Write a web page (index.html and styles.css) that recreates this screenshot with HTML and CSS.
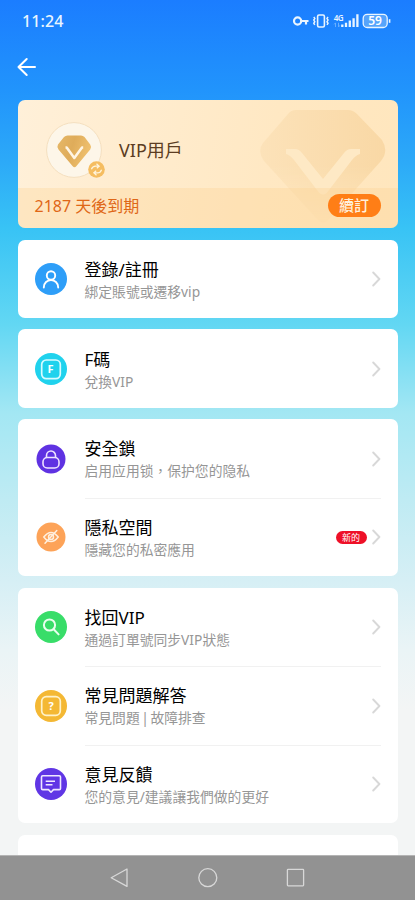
FILE: index.html
```html
<!DOCTYPE html>
<html lang="zh-Hant">
<head>
<meta charset="utf-8">
<meta name="viewport" content="width=device-width, initial-scale=1">
<title>VIP用戶</title>
<link rel="stylesheet" href="styles.css">
</head>
<body>
<div class="screen">
  <header class="status">
    <span class="time">11:24</span>
    <svg class="status-icons" width="100" height="18" viewBox="0 0 100 18" fill="none" stroke="#e9f5ff">
      <circle cx="5.6" cy="9" r="3.6" stroke-width="2.2"/>
      <path d="M9.2 9H16.5M14 9v3.6" stroke-width="2.2"/>
      <rect x="25.6" y="3" width="6.8" height="12" rx="1.4" stroke-width="1.6"/>
      <path d="M21.800 5l1 1.500-1 1.600 1 1.600-1 1.600 1 1.600M36 5l-1 1.500 1 1.600-1 1.600 1 1.600-1 1.600" stroke-width="1.500"/>
      <text class="net" x="41.800" y="8.500">4G</text>
      <path d="M43.500 15v-4m-1.300 1.400L43.500 10.800M46.500 10.800v4m1.300-1.400L46.500 15" stroke="#78b9ff" stroke-width=".8"/>
      <path d="M50.300 15v-2.500M54 15v-4.200M57.800 15V8.500M61.600 15V6.200M65.400 15V2.300" stroke-width="2.300"/>
      <rect x="71.200" y="2.300" width="24" height="13.200" rx="4" fill="#56a4fb" stroke-width="1.300"/>
      <path d="M97.600 7.200v3.600" stroke-width="1.600"/>
      <text class="battery" x="83.100" y="13.200" text-anchor="middle">59</text>
    </svg>
  </header>
  <nav class="appbar">
    <svg width="20" height="20" viewBox="0 0 20 20" fill="none" stroke="#fff" stroke-width="2" stroke-linecap="round" stroke-linejoin="round"><path d="M9.700 2L1.500 10l8.200 8M1.500 10H18"/></svg>
  </nav>
  <main class="cards">
    <section class="vip">
      <svg class="gem" width="128" height="116" viewBox="0 0 128 116">
        <defs><linearGradient id="gemFill" x1="0" y1=".4" x2="1" y2=".4"><stop offset="0" stop-color="#fce2b9"/><stop offset="1" stop-color="#f9d8a5"/></linearGradient>
        <linearGradient id="gemFade" x1="0" y1="0" x2="0" y2="1"><stop offset=".5" stop-color="#fff"/><stop offset="1" stop-color="#fff" stop-opacity=".15"/></linearGradient>
        <mask id="gemMask"><rect width="128" height="116" fill="url(#gemFade)"/></mask></defs>
        <path mask="url(#gemMask)" fill="url(#gemFill)" d="M37 1H89Q94 1 98 5L123 31Q130 42 122 52L70 110Q64 117 58 110L5 52Q-2 42 4 34L29 5Q32 1 37 1Z"/>
        <path fill="#fee9c5" d="M27 40H36Q40 40 43 44L64 70 85 44Q88 40 92 40H101V45Q97 46 93 51L70 81Q64 90 58 81L35 51Q31 46 27 45Z"/>
      </svg>
      <div class="vip-top">
        <div class="avatar">
          <svg width="56" height="56" viewBox="0 0 56 56">
            <defs><linearGradient id="badge" x1="0" y1="0" x2="1" y2=".3"><stop offset="0" stop-color="#e6b868"/><stop offset=".5" stop-color="#dfac5a"/><stop offset="1" stop-color="#efc06e"/></linearGradient></defs>
            <circle cx="28" cy="28" r="27.400" fill="#fdf6e9" stroke="#f4dfbf"/>
            <path fill="url(#badge)" d="M21.500 13.500H35Q37 13.500 38.500 15L44.200 22.500Q46 25 44.200 27.500L30.500 44Q28.500 46.500 26.500 44L12.500 27.500Q10.500 25 12 22.500L18 15Q19.500 13.500 21.500 13.500Z"/>
            <path d="M19.500 25.500h1.200L28.300 36 36 25.500h1.200" fill="none" stroke="#fff5e4" stroke-width="2.500" stroke-linejoin="round"/>
          </svg>
          <svg class="swap" width="17" height="17" viewBox="0 0 17 17"><circle cx="8.500" cy="8.500" r="8.300" fill="#f5bd61"/><path d="M3.400 8.300Q4.500 5.200 7.500 5.200H11M8.500 2.800L11.200 5.200 8.800 7.300M13.600 8.700Q12.500 11.800 9.500 11.800H6M8.500 14.200L5.800 11.800 8.200 9.700" fill="none" stroke="#fff4dc" stroke-width="1.200"/></svg>
        </div>
        <h1>VIP用戶</h1>
      </div>
      <div class="vip-bottom"><span>2187 天後到期</span><button>續訂</button></div>
    </section>

    <section class="card single">
      <div class="row">
        <svg class="icon" viewBox="0 0 32 32"><circle cx="16" cy="16" r="16" fill="#2e9ef8"/><g fill="none" stroke="#fff" stroke-width="1.900" stroke-linecap="round"><circle cx="16" cy="12.500" r="4.200"/><path d="M8.800 24.500C8.800 14.600 23.200 14.600 23.200 24.500"/></g></svg>
        <div class="body"><h2>登錄/註冊</h2><p>綁定賬號或遷移vip</p></div>
        <svg class="chevron" viewBox="0 0 9 16"><path d="M1.200 1.500L7.400 8l-6.200 6.500"/></svg>
      </div>
    </section>

    <section class="card single">
      <div class="row">
        <svg class="icon" viewBox="0 0 32 32"><circle cx="16" cy="16" r="16" fill="#20d2ed"/><rect x="6.700" y="7" width="18.600" height="18.600" rx="4.500" fill="none" stroke="#d8fbff" stroke-width="1.700"/><text class="glyph" x="15.500" y="20.300">F</text></svg>
        <div class="body"><h2>F碼</h2><p>兌換VIP</p></div>
        <svg class="chevron" viewBox="0 0 9 16"><path d="M1.200 1.500L7.400 8l-6.200 6.500"/></svg>
      </div>
    </section>

    <section class="card">
      <div class="row">
        <svg class="icon" viewBox="0 0 32 32"><circle cx="16" cy="16" r="14.500" fill="#5f32e2"/><g fill="none" stroke="#eee3ff" stroke-width="1.600"><rect x="8" y="14.500" width="16" height="10.500" rx="4.300"/><path d="M11.500 14.500V12.500a4.500 4.500 0 0 1 9 0V14.500"/></g></svg>
        <div class="body"><h2>安全鎖</h2><p>启用应用锁，保护您的隐私</p></div>
        <svg class="chevron" viewBox="0 0 9 16"><path d="M1.200 1.500L7.400 8l-6.200 6.500"/></svg>
      </div>
      <div class="row">
        <svg class="icon" viewBox="0 0 32 32"><circle cx="16" cy="16" r="14.500" fill="#fda358"/><g fill="none" stroke="#fff0df" stroke-width="1.500" stroke-linecap="round"><path d="M8.800 16Q16 6.800 23.200 16Q16 25.200 8.800 16Z"/><circle cx="16" cy="16" r="2.500"/><path d="M10 22.200L21.800 9.500"/></g></svg>
        <div class="body"><h2>隱私空間</h2><p>隱藏您的私密應用</p></div>
        <span class="new">新的</span>
        <svg class="chevron" viewBox="0 0 9 16"><path d="M1.200 1.500L7.400 8l-6.200 6.500"/></svg>
      </div>
    </section>

    <section class="card">
      <div class="row">
        <svg class="icon" viewBox="0 0 32 32"><circle cx="16" cy="16" r="16" fill="#38dd69"/><g fill="none" stroke="#e9ffef" stroke-width="2" stroke-linecap="round"><circle cx="14.500" cy="14" r="5.600"/><path d="M18.700 18.300L23.600 23.400"/></g></svg>
        <div class="body"><h2>找回VIP</h2><p>通過訂單號同步VIP狀態</p></div>
        <svg class="chevron" viewBox="0 0 9 16"><path d="M1.200 1.500L7.400 8l-6.200 6.500"/></svg>
      </div>
      <div class="row">
        <svg class="icon" viewBox="0 0 32 32"><circle cx="16" cy="16" r="16" fill="#f4b834"/><rect x="6.700" y="6.700" width="18.600" height="18.600" rx="4.500" fill="none" stroke="#fff2c9" stroke-width="1.700"/><text class="glyph" x="16" y="19.800">?</text></svg>
        <div class="body"><h2>常見問題解答</h2><p class="tight">常見問題 | 故障排查</p></div>
        <svg class="chevron" viewBox="0 0 9 16"><path d="M1.200 1.500L7.400 8l-6.200 6.500"/></svg>
      </div>
      <div class="row">
        <svg class="icon" viewBox="0 0 32 32"><circle cx="16" cy="16" r="16" fill="#6036e5"/><path d="M7.700 7.700H24.300Q25.500 7.700 25.500 8.900V20.400Q25.500 21.600 24.300 21.600H18.500L16 24.200 13.500 21.600H7.700Q6.500 21.600 6.500 20.400V8.900Q6.500 7.700 7.700 7.700ZM10.700 13.300H20M10.700 16.800H17.500" fill="none" stroke="#efe7ff" stroke-width="1.600" stroke-linejoin="round"/></svg>
        <div class="body"><h2>意見反饋</h2><p>您的意見/建議讓我們做的更好</p></div>
        <svg class="chevron" viewBox="0 0 9 16"><path d="M1.200 1.500L7.400 8l-6.200 6.500"/></svg>
      </div>
    </section>
    <section class="card next"></section>
  </main>
  <footer class="navbar">
    <svg width="20" height="20" viewBox="0 0 20 20"><path d="M17 1V18.400L1.200 9.700Z"/></svg>
    <svg width="20" height="20" viewBox="0 0 20 20"><circle cx="9.800" cy="9.700" r="9"/></svg>
    <svg width="20" height="20" viewBox="0 0 20 20"><rect x="1.400" y="1.400" width="16.200" height="16.400" rx=".7"/></svg>
  </footer>
</div>
</body>
</html>
```
FILE: styles.css
```css
* { box-sizing: border-box; }
body {
  margin: 0;
  font-family: "Noto Sans", "Noto Sans CJK TC", sans-serif;
}
h1, h2, p { margin: 0; font-weight: 400; }
svg { display: block; flex: none; }

.screen {
  width: 415px;
  height: 900px;
  overflow: hidden;
  display: flex;
  flex-direction: column;
  background: linear-gradient(#1b7dff 0, #2194fc 90px, #2ca9f8 160px, #38c3f5 228px, #62d7f3 324px, #a3e7f3 413px, #bfebf3 500px, #d6eff5 581px, #eaf4f6 650px, #f3f5f5 710px);
}

.status {
  height: 42px;
  padding: 0 23px 0 22px;
  display: flex;
  align-items: center;
  justify-content: space-between;
  color: #e9f5ff;
}
.time { font-size: 16px; font-weight: 500; letter-spacing: .1px; line-height: 42px; }
.net { font: 600 8px "Noto Sans", sans-serif; letter-spacing: -.5px; fill: #e9f5ff; stroke: none; }
.battery { font: 600 12px "Noto Sans", sans-serif; fill: #fff; stroke: none; }
.glyph { font: 700 11px "Noto Sans", sans-serif; fill: #fff; text-anchor: middle; }

.appbar { height: 50px; padding: 0 17px; display: flex; align-items: center; }

.cards {
  flex: 1;
  min-height: 0;
  overflow: hidden;
  padding: 7.500px 17.500px 0;
  display: flex;
  flex-direction: column;
  gap: 11.500px;
}

.vip {
  position: relative;
  flex: none;
  height: 128.600px;
  border-radius: 7px;
  overflow: hidden;
  background: linear-gradient(100deg, #fff0d9, #ffe8c3 65%, #ffe6bd);
}
.gem { position: absolute; left: 241px; top: 9px; }
.vip-top { height: 88.500px; padding: 12px 0 0 28.500px; display: flex; align-items: center; gap: 17px; }
.avatar { position: relative; }
.swap { position: absolute; left: 42px; top: 39px; }
.vip h1 { font-size: 18px; line-height: 24px; color: #5c3d22; }
.vip-bottom {
  position: relative;
  height: 40.100px;
  padding: 0 17px;
  display: flex;
  align-items: center;
  justify-content: space-between;
  background: rgba(252, 208, 142, .3);
  color: #df6717;
  font-size: 16px;
}
.vip-bottom span { line-height: 24px; padding-bottom: 4px; }
.vip-bottom button {
  width: 53px;
  height: 23px;
  margin-bottom: 5px;
  padding: 0;
  border: 0;
  border-radius: 12px;
  background: #ff7e16;
  color: #fff0dc;
  font: 500 15px/23px "Noto Sans", "Noto Sans CJK TC", sans-serif;
}

.card { flex: none; background: #fff; border-radius: 7px; padding: 0 17px; }
.next { height: 60px; }
.row { height: 78.500px; display: flex; align-items: center; }
.single .row { height: 78.350px; }
.icon { width: 32px; height: 32px; }
.body {
  flex: 1;
  align-self: stretch;
  margin-left: 18px;
  padding-top: 17px;
}
.single .body { padding-top: 17.200px; }
.row + .row .body { position: relative; }
.row + .row .body::before {
  content: "";
  position: absolute;
  left: 0;
  top: 0;
  width: 296px;
  height: 1px;
  background: #f1f1f1;
}
.body h2 { font-size: 17px; line-height: 25px; color: #000; }
.body p { font-size: 13.800px; line-height: 20px; color: #969696; }
.body .tight { word-spacing: -2px; }
.chevron { width: 9px; height: 16px; fill: none; stroke: #d8d8d8; stroke-width: 1.900; stroke-linecap: round; stroke-linejoin: round; }
.new {
  width: 31px;
  height: 13px;
  margin-right: 5px;
  border-radius: 7px;
  background: #ee1027;
  color: #fff;
  font-size: 9px;
  line-height: 13px;
  text-align: center;
}

.navbar {
  flex: none;
  height: 45px;
  border-top: 1px solid #b4b4b4;
  background: #929292;
  display: flex;
  align-items: center;
  justify-content: center;
  gap: 68px;
}
.navbar svg { fill: none; stroke: #d8d8d8; stroke-width: 1.300; stroke-linejoin: round; }
```
